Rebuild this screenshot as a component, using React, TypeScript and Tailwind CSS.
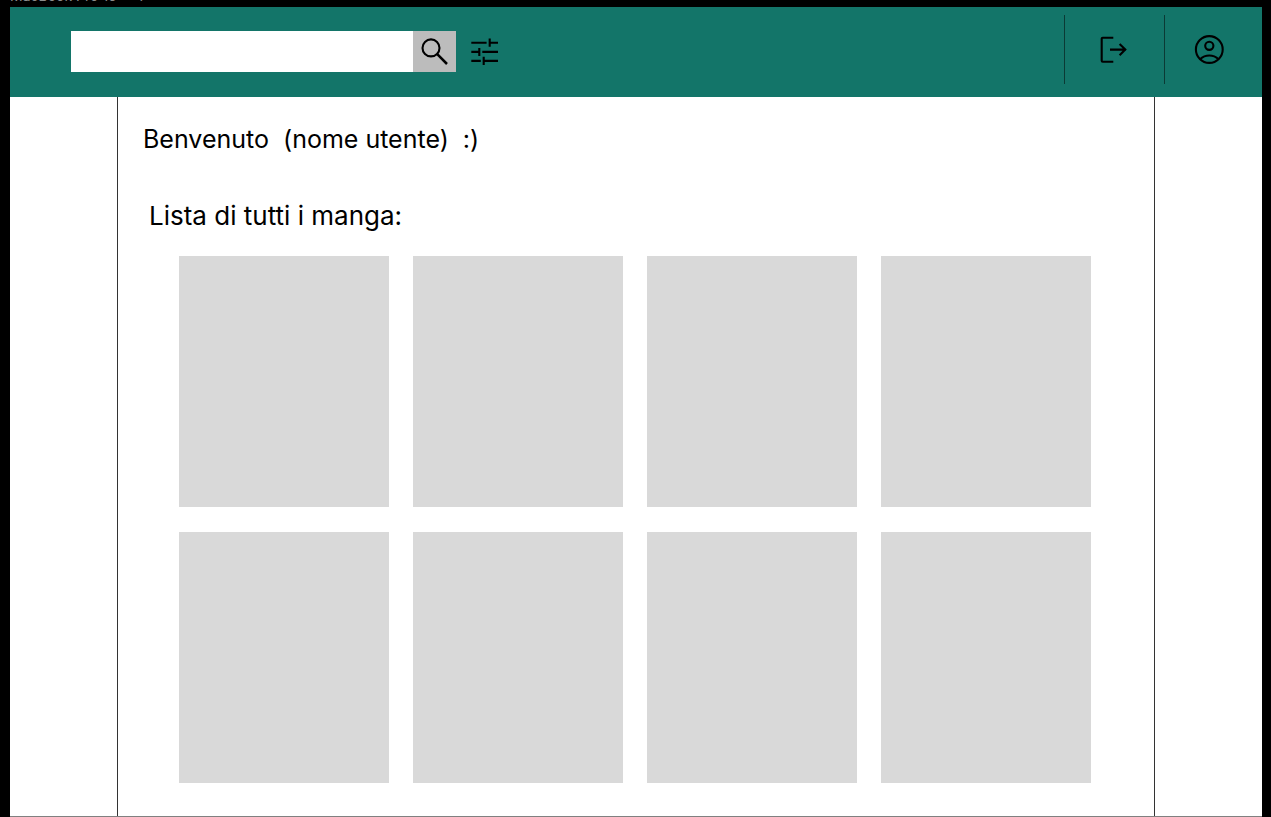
import type { ReactNode } from "react";

function SearchIcon() {
  return (
    <svg width="28" height="27" viewBox="0 0 28 27" fill="none" stroke="#000" strokeWidth="2.1" aria-hidden="true">
      <circle cx="10" cy="9.9" r="8.5" />
      <path d="M16 15.8L26 26" strokeWidth="2.5" />
    </svg>
  );
}

function TuneIcon() {
  return (
    <svg width="28" height="27" viewBox="0 0 28 27" fill="none" stroke="#000" strokeWidth="2.1" aria-hidden="true">
      <path d="M.3 4.8H15.6M18.7 4.8H27M18.7.6V8.8M.3 13.9H8.3M11.3 13.9H27M8.3 9.9V18.1M.3 22.9H9.8M12.7 22.9H27M12.7 18.8V27" />
    </svg>
  );
}

function LogoutIcon() {
  return (
    <svg width="28" height="27" viewBox="0 0 28 27" fill="none" stroke="#000" strokeWidth="2.1" aria-hidden="true">
      <path d="M13.3 1.7H2.7Q1.7 1.7 1.7 2.7V24.7Q1.7 25.7 2.7 25.7H13.3" />
      <path d="M10 13.6H26M19.6 8L25.3 13.6L19.6 19.2" />
    </svg>
  );
}

function AccountIcon() {
  return (
    <svg width="30" height="31" viewBox="0 0 30 31" fill="none" stroke="#000" strokeWidth="2.1" aria-hidden="true">
      <circle cx="15.3" cy="15.5" r="13.4" />
      <circle cx="15.3" cy="11.8" r="4.1" />
      <path d="M6 25.2Q10 21.5 15.3 21.5T24.6 25.2" />
    </svg>
  );
}

function HeaderAction({ label, className, children }: { label: string; className: string; children: ReactNode }) {
  return (
    <div className={`flex h-[69px] border-l border-[#0b3a35] ${className}`}>
      <button type="button" aria-label={label} className="flex grow items-center justify-center">
        {children}
      </button>
    </div>
  );
}

const manga = [1, 2, 3, 4, 5, 6, 7, 8];

export default function App() {
  return (
    <div className="flex min-h-screen flex-col bg-black pr-[9px] pl-[10px] font-['Inter',sans-serif] text-black">
      <div className="flex h-[7px] items-end text-sm leading-4 text-[#8c8c8c]">
        <span className="pb-[3px]">MacBook Pro 16&quot; - 1</span>
      </div>
      <div className="flex grow flex-col border-b border-[#808080] bg-white">
        <header className="flex h-[90px] items-center justify-between bg-[#137569] pb-0.5 pl-[61px]">
          <form className="flex items-center" onSubmit={(e) => e.preventDefault()}>
            <input type="search" aria-label="Cerca manga" className="h-[41px] w-[342px] bg-white px-3 text-lg outline-none" />
            <button type="submit" aria-label="Cerca" className="flex h-[41px] w-[43px] items-center justify-center bg-[#bcbcbc]">
              <SearchIcon />
            </button>
            <button type="button" aria-label="Filtri" className="ml-[15px]">
              <TuneIcon />
            </button>
          </form>
          <div className="flex pb-1">
            <HeaderAction label="Esci" className="w-[100px] pr-0.5">
              <LogoutIcon />
            </HeaderAction>
            <HeaderAction label="Profilo" className="w-[98px] pr-2.5">
              <AccountIcon />
            </HeaderAction>
          </div>
        </header>
        <main className="mx-[107px] grow border-x border-[#333] pt-[26px] pb-8">
          <h1 className="pl-[25px] text-[25px] leading-8 whitespace-pre">{"Benvenuto  (nome utente)  :)"}</h1>
          <h2 className="mt-[45px] pl-[31px] text-[26px] leading-8">Lista di tutti i manga:</h2>
          <ul className="mt-6 mr-[63px] ml-[61px] grid grid-cols-4 gap-x-6 gap-y-[25px]">
            {manga.map((id) => (
              <li key={id} className="h-[251px] bg-[#d9d9d9]" />
            ))}
          </ul>
        </main>
      </div>
    </div>
  );
}
